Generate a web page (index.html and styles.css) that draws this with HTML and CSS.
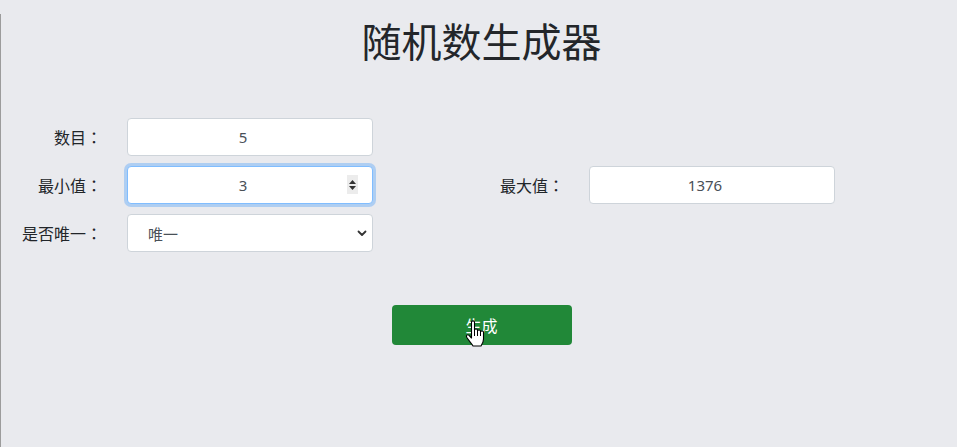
FILE: index.html
```html
<!DOCTYPE html>
<html lang="zh-CN">
<head>
<meta charset="utf-8">
<title>随机数生成器</title>
<link rel="stylesheet" href="styles.css">
</head>
<body>
<div class="page">
  <h1 class="title">随机数生成器</h1>
  <form class="form">
    <label class="label">数目<span class="colon" lang="ja">：</span></label>
    <input class="control num" type="text" value="5">
    <div class="filler"></div>
    <div class="filler"></div>

    <label class="label">最小值<span class="colon" lang="ja">：</span></label>
    <div class="field">
      <input class="control num focused" type="text" value="3">
      <span class="spin">
        <svg width="9" height="14" viewBox="0 0 9 14"><path d="M4.5 2 L8 6 H1 Z M1 8 H8 L4.5 12 Z" fill="#333"/></svg>
      </span>
    </div>
    <label class="label">最大值<span class="colon" lang="ja">：</span></label>
    <input class="control num" type="text" value="1376">

    <label class="label">是否唯一<span class="colon" lang="ja">：</span></label>
    <div class="field">
      <select class="control select">
        <option>唯一</option>
        <option>不唯一</option>
      </select>
      <svg class="chev" width="10" height="7" viewBox="0 0 10 7"><path d="M1.5 1.5 L5 5 L8.5 1.5" fill="none" stroke="#333" stroke-width="1.8" stroke-linecap="round" stroke-linejoin="round"/></svg>
    </div>
  </form>
  <div class="actions">
    <div class="btn-wrap">
      <button class="btn" type="button">生成</button>
      <svg class="cursor" width="22" height="28" viewBox="0 0 22 28"><path d="M6.5 2 C6.5 0.5 9.5 0.5 9.5 2 V10 C9.5 8.6 12.5 8.6 12.5 10 V11 C12.5 9.6 15.5 9.6 15.5 11 V12 C15.5 10.6 18.5 10.6 18.5 12 V19 C18.5 22 17 24 16 26 H8 C7 24.5 3.5 20 1.7 17.2 C0.8 15.5 2.5 14 3.8 15.2 L6.5 18 Z" fill="#fff" stroke="#000" stroke-width="1.1" stroke-linejoin="round"/><path d="M9.5 10 V16 M12.5 11 V16 M15.5 12 V16" stroke="#000" stroke-width="1"/></svg>
    </div>
  </div>
</div>
</body>
</html>
```

FILE: styles.css
```css
html, body {
  margin: 0;
  padding: 0;
  background: #e9eaee;
}

.page {
  min-height: 447px;
  box-sizing: border-box;
  border-left: 1px solid #9c9c9c;
  font-family: "Noto Sans", "Noto Sans CJK SC", sans-serif;
  color: #212529;
}

.title {
  margin: 14px 0 0;
  padding-left: 5px;
  text-align: center;
  font-family: "Noto Sans CJK SC", sans-serif;
  font-size: 40px;
  font-weight: 400;
  line-height: 52px;
  color: #23262a;
}

.form {
  margin-top: 52px;
  display: grid;
  grid-template-columns: 101px 246px 166px 246px;
  column-gap: 25px;
  row-gap: 10px;
  align-items: center;
}

.label {
  text-align: right;
  font-family: "Noto Sans CJK SC", sans-serif;
  font-size: 16px;
  color: #212529;
  white-space: nowrap;
}

.colon {
  font-family: "Noto Sans CJK JP", sans-serif;
}

.field {
  position: relative;
}

.control {
  display: block;
  width: 246px;
  height: 38px;
  box-sizing: border-box;
  margin: 0;
  padding: 6px 12px;
  border: 1px solid #ced4da;
  border-radius: 4px;
  background: #fff;
  font-family: "Noto Sans", "Noto Sans CJK SC", sans-serif;
  font-size: 15px;
  color: #495057;
  text-align: center;
  outline: none;
}

.num {
  padding-right: 26px;
}

.focused {
  border-color: #80bdff;
  box-shadow: 0 0 0 3px rgba(0, 123, 255, 0.25);
}

.spin {
  position: absolute;
  right: 15px;
  top: 9px;
  width: 11px;
  height: 19px;
  background: #ececec;
  display: flex;
  align-items: center;
  justify-content: center;
}

.select {
  -webkit-appearance: none;
  appearance: none;
  text-align: left;
  padding-left: 20px;
  font-family: "Noto Sans CJK SC", sans-serif;
}

.chev {
  position: absolute;
  right: 6px;
  top: 16px;
  pointer-events: none;
}

.actions {
  margin-top: 53px;
  display: flex;
  justify-content: center;
  padding-left: 5px;
}

.btn-wrap {
  position: relative;
}

.btn {
  width: 180px;
  height: 40px;
  border: none;
  border-radius: 4px;
  background: #218838;
  color: #fff;
  font-family: "Noto Sans CJK SC", sans-serif;
  font-size: 16px;
  padding: 0;
}

.cursor {
  position: absolute;
  left: 73px;
  top: 15px;
}
```
